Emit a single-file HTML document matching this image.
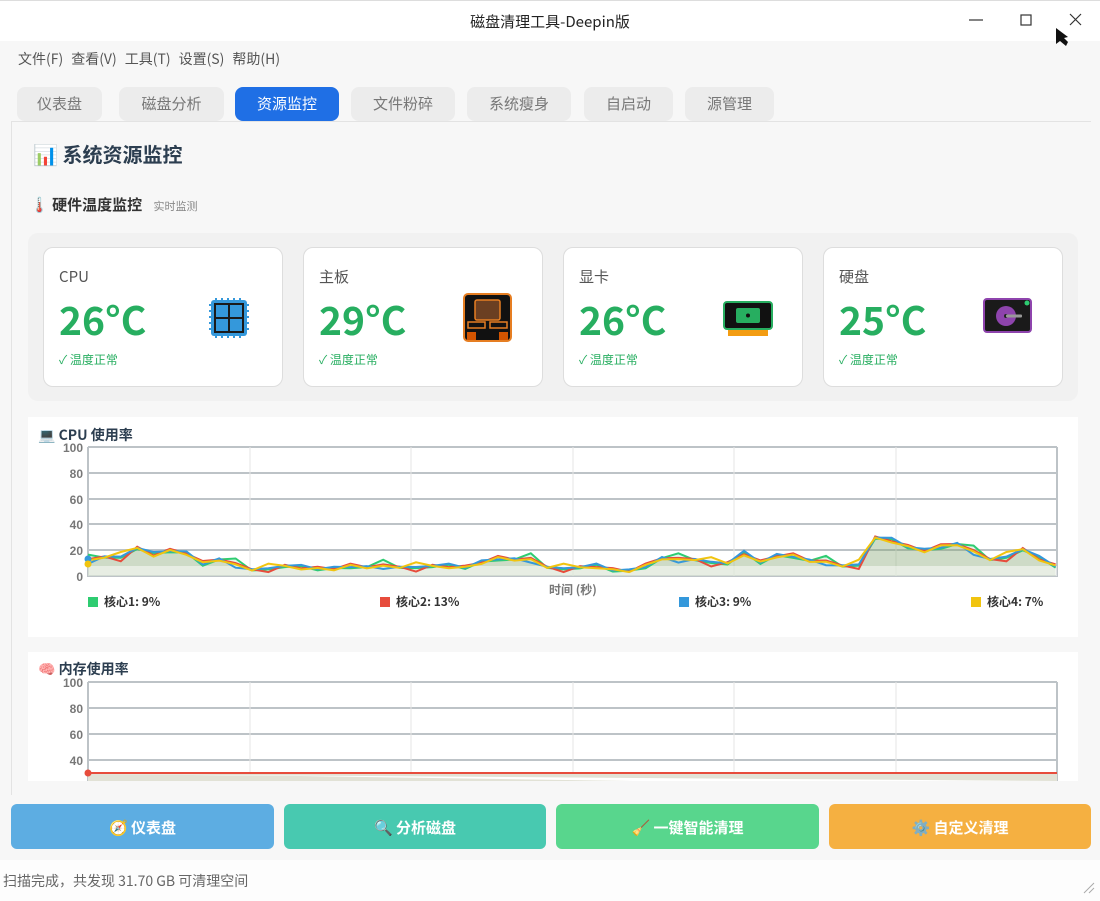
<!DOCTYPE html>
<html><head><meta charset="utf-8">
<style>
*{margin:0;padding:0;box-sizing:border-box}
body{width:1100px;height:901px;overflow:hidden;background:#f7f7f7;font-family:"Noto Sans CJK SC","Liberation Sans",sans-serif;position:relative;color:#333}
.abs{position:absolute}
.title{left:0;top:0;width:1100px;height:41px;background:#fff;border-top:1px solid #ddd;text-align:center;line-height:41px;font-size:15px;color:#222}
.menu{left:18px;top:49px;font-size:14px;color:#555}
.menu span{margin-right:8px}
.tab{top:87px;height:34px;border-radius:8px;background:#ececec;color:#777;font-size:15px;text-align:center;line-height:34px}
.tab.on{background:#1f6fe5;color:#fff}
.panel{left:11px;top:121px;width:1080px;height:674px;background:#f7f7f7;border-top:1px solid #e3e3e3;border-left:1px solid #e3e3e3}
.card{top:247px;width:240px;height:140px;background:#fff;border:1px solid #ddd;border-radius:10px}
.card .n{position:absolute;left:15px;top:18px;font-size:15px;color:#555}
.card .t{position:absolute;left:15px;top:42px;font-size:39px;line-height:58px;font-weight:bold;color:#27ae60}
.card .s{position:absolute;left:15px;top:103px;font-size:12px;color:#27ae60}
.card svg{position:absolute}
.btn{top:804px;height:45px;border-radius:6px;color:#fff;font-size:15px;font-weight:bold;text-align:center;line-height:47px}
.ax{font-size:12px;font-weight:bold;fill:#777;font-family:"Liberation Sans",sans-serif}
.lg{font-size:12px;font-weight:bold;color:#333;position:absolute}
.lg i{display:inline-block;width:10px;height:10px;margin-right:6px;vertical-align:-1px}
</style></head><body>
<div class="abs title">磁盘清理工具-Deepin版</div>
<svg class="abs" style="left:960px;top:8px" width="140" height="40">
<line x1="9" y1="12" x2="23" y2="12" stroke="#333" stroke-width="1.2"/>
<rect x="61" y="7" width="10" height="10" fill="none" stroke="#333" stroke-width="1.2"/>
<path d="M110 6L121 17M121 6L110 17" stroke="#333" stroke-width="1.2"/>
<path d="M96 20L96 36L100 33L106 38L108 34L104 30L108 29Z" fill="#111"/>
</svg>
<div class="abs menu"><span>文件(F)</span><span>查看(V)</span><span>工具(T)</span><span>设置(S)</span><span>帮助(H)</span></div>
<div class="abs tab" style="left:17px;width:85px">仪表盘</div>
<div class="abs tab" style="left:119px;width:105px">磁盘分析</div>
<div class="abs tab on" style="left:235px;width:104px">资源监控</div>
<div class="abs tab" style="left:351px;width:104px">文件粉碎</div>
<div class="abs tab" style="left:467px;width:104px">系统瘦身</div>
<div class="abs tab" style="left:584px;width:89px">自启动</div>
<div class="abs tab" style="left:685px;width:89px">源管理</div>
<div class="abs panel"></div>
<div class="abs" style="left:33px;top:139px;font-size:20px;font-weight:bold;color:#2c3e50">📊 系统资源监控</div>
<div class="abs" style="left:30px;top:194px;font-size:15px;font-weight:bold;color:#333">🌡️ 硬件温度监控 <span style="font-size:11px;color:#888;font-weight:normal;margin-left:8px">实时监测</span></div>
<div class="abs" style="left:28px;top:233px;width:1050px;height:168px;background:#f1f1f1;border-radius:10px"></div>

<div class="abs card" style="left:43px"><div class="n">CPU</div><div class="t">26°C</div><div class="s">✓ 温度正常</div>
<svg style="left:163px;top:48px" width="44" height="44" viewBox="0 0 44 44"><g fill="#3498db"><rect x="8" y="2" width="2" height="40"/><rect x="14" y="2" width="2" height="40"/><rect x="20" y="2" width="2" height="40"/><rect x="26" y="2" width="2" height="40"/><rect x="32" y="2" width="2" height="40"/><rect x="2" y="8" width="40" height="2"/><rect x="2" y="14" width="40" height="2"/><rect x="2" y="20" width="40" height="2"/><rect x="2" y="26" width="40" height="2"/><rect x="2" y="32" width="40" height="2"/></g><rect x="4" y="4" width="36" height="36" rx="3" fill="#3498db"/><rect x="7" y="7" width="30" height="30" fill="#1a1a1a"/><g fill="#3498db"><rect x="9" y="9" width="12" height="12"/><rect x="23" y="9" width="12" height="12"/><rect x="9" y="23" width="12" height="12"/><rect x="23" y="23" width="12" height="12"/></g></svg></div>

<div class="abs card" style="left:303px"><div class="n">主板</div><div class="t">29°C</div><div class="s">✓ 温度正常</div>
<svg style="left:159px;top:45px" width="50" height="50" viewBox="0 0 50 50"><rect x="1" y="1" width="47" height="47" rx="4" fill="#111"/><rect x="1" y="1" width="47" height="47" rx="4" fill="none" stroke="#e67e22" stroke-width="2"/><rect x="12" y="7" width="25" height="20" rx="2" fill="#6b3f22" stroke="#e67e22" stroke-width="1.5"/><rect x="5" y="29" width="17" height="6" fill="none" stroke="#e67e22" stroke-width="1.5"/><rect x="27" y="29" width="17" height="6" fill="none" stroke="#e67e22" stroke-width="1.5"/><rect x="4" y="39" width="9" height="8" fill="#d35400"/><rect x="36" y="39" width="9" height="8" fill="#d35400"/></svg></div>

<div class="abs card" style="left:563px"><div class="n">显卡</div><div class="t">26°C</div><div class="s">✓ 温度正常</div>
<svg style="left:159px;top:53px" width="50" height="38" viewBox="0 0 50 38"><rect x="5" y="26" width="40" height="9" fill="#f39c12"/><rect x="1" y="1" width="48" height="27" rx="3" fill="#111" stroke="#27ae60" stroke-width="2"/><rect x="13" y="7" width="24" height="15" rx="2" fill="#27ae60"/><circle cx="25" cy="14.5" r="2" fill="#111"/></svg></div>

<div class="abs card" style="left:823px"><div class="n">硬盘</div><div class="t">25°C</div><div class="s">✓ 温度正常</div>
<svg style="left:159px;top:50px" width="50" height="36" viewBox="0 0 50 36"><rect x="1" y="1" width="47" height="33" rx="3" fill="#1a1a1a" stroke="#8e44ad" stroke-width="2"/><circle cx="23" cy="18" r="10" fill="#8e44ad"/><circle cx="23" cy="18" r="2" fill="#222"/><rect x="23" y="16.5" width="16" height="3" rx="1" fill="#999"/><circle cx="44" cy="5" r="2.5" fill="#2ecc71"/></svg></div>

<div class="abs" style="left:28px;top:417px;width:1050px;height:220px;background:#fff"></div>
<div class="abs" style="left:38px;top:425px;font-size:14px;font-weight:bold;color:#2c3e50">💻 CPU 使用率</div>
<svg class="abs" style="left:0;top:0" width="1100" height="800" id="cpu"></svg>
<div class="abs" style="left:549px;top:581px;font-size:12px;font-weight:bold;color:#777">时间 (秒)</div>
<div class="lg" style="left:88px;top:593px"><i style="background:#2ecc71"></i>核心1: 9%</div>
<div class="lg" style="left:380px;top:593px"><i style="background:#e74c3c"></i>核心2: 13%</div>
<div class="lg" style="left:679px;top:593px"><i style="background:#3498db"></i>核心3: 9%</div>
<div class="lg" style="left:971px;top:593px"><i style="background:#f1c40f"></i>核心4: 7%</div>

<div class="abs" style="left:28px;top:652px;width:1050px;height:129px;background:#fff;overflow:hidden">
<svg width="1050" height="129" viewBox="28 652 1050 129" style="position:absolute;left:0;top:0">
<g stroke="#bdc3c7" stroke-width="2"><line x1="88" y1="708" x2="1057" y2="708"/><line x1="88" y1="734" x2="1057" y2="734"/><line x1="88" y1="760" x2="1057" y2="760"/><line x1="88" y1="682" x2="1057" y2="682"/></g>
<g stroke="#e5e5e5"><line x1="250" y1="682" x2="250" y2="790"/><line x1="411" y1="682" x2="411" y2="790"/><line x1="573" y1="682" x2="573" y2="790"/><line x1="734" y1="682" x2="734" y2="790"/><line x1="896" y1="682" x2="896" y2="790"/></g>
<line x1="88" y1="682" x2="88" y2="790" stroke="#bdc3c7" stroke-width="2"/><line x1="1057" y1="682" x2="1057" y2="790" stroke="#bdc3c7" stroke-width="2"/>
<path d="M88 774L1057 773L1057 790L88 790Z" fill="#e2e2d6"/>
<path d="M88 774L300 776L700 782L1057 781" fill="#fff"/>
<line x1="88" y1="773" x2="1057" y2="773" stroke="#e74c3c" stroke-width="2"/>
<circle cx="88" cy="773" r="3.5" fill="#e74c3c"/>
<g class="ax" text-anchor="end"><text x="83" y="687">100</text><text x="83" y="713">80</text><text x="83" y="739">60</text><text x="83" y="765">40</text></g>
</svg>
<div style="position:absolute;left:10px;top:7px;font-size:14px;font-weight:bold;color:#2c3e50">🧠 内存使用率</div>
</div>

<div class="abs btn" style="left:11px;width:263px;background:#5dade2">🧭 仪表盘</div>
<div class="abs btn" style="left:284px;width:262px;background:#48c9b0">🔍 分析磁盘</div>
<div class="abs btn" style="left:556px;width:263px;background:#58d68d">🧹 一键智能清理</div>
<div class="abs btn" style="left:829px;width:262px;background:#f5b041">⚙️ 自定义清理</div>
<div class="abs" style="left:0;top:860px;width:1100px;height:41px;background:#fdfdfd"></div>
<div class="abs" style="left:3px;top:871px;font-size:14px;color:#666">扫描完成，共发现 31.70 GB 可清理空间</div>
<svg class="abs" style="left:1082px;top:881px" width="14" height="14"><path d="M2 12L12 2M7 12L12 7" stroke="#aaa"/></svg>

<script>
var base=[13,17,15,20,15,22,20,8,11,10,7,6,6,5,8,8,6,5,9,9,7,6,6,9,13,12,11,14,9,6,5,6,7,6,6,12,14,15,11,8,16,13,18,14,10,12,10,9,28,26,25,22,21,23,20,15,15,19,12,10];
var cols=["#2ecc71","#e74c3c","#3498db","#f1c40f"];
var s='<g stroke="#bdc3c7" stroke-width="2">';
[473,499,524,550,576,447].forEach(function(y){s+='<line x1="88" y1="'+y+'" x2="1057" y2="'+y+'"/>'});
s+='</g><g stroke="#e5e5e5">';
[250,411,573,734,896].forEach(function(x){s+='<line x1="'+x+'" y1="447" x2="'+x+'" y2="576"/>'});
s+='</g><line x1="88" y1="447" x2="88" y2="577" stroke="#bdc3c7" stroke-width="2"/><line x1="1057" y1="447" x2="1057" y2="577" stroke="#bdc3c7" stroke-width="2"/>';
var ser=[];
for(var c=0;c<4;c++){var p=[];for(var i=0;i<60;i++){var v=base[i]+((i*7+c*13)%9-4)*0.9*(c%2?1:-1);if(v<3)v=3;p.push([88+i*16.4,576-v*1.29]);}ser.push(p);}
var fills=["rgba(46,204,113,0.15)","rgba(231,76,60,0.08)","rgba(52,152,219,0.12)","rgba(241,196,15,0.1)"];
for(c=0;c<4;c++){var d='M88 576';ser[c].forEach(function(q){d+='L'+q[0].toFixed(1)+' '+q[1].toFixed(1)});d+='L1055.6 576Z';s+='<path d="'+d+'" fill="'+fills[c]+'"/>';}
s+='<path d="M88 566L1057 566L1057 576L88 576Z" fill="rgba(255,255,255,0.5)"/>';
for(c=0;c<4;c++){var d2='M'+ser[c].map(function(q){return q[0].toFixed(1)+' '+q[1].toFixed(1)}).join('L');s+='<path d="'+d2+'" fill="none" stroke="'+cols[c]+'" stroke-width="2"/>';}
s+='<circle cx="88" cy="559" r="3.5" fill="#3498db"/><circle cx="88" cy="564" r="3.5" fill="#f1c40f"/>';
s+='<g class="ax" text-anchor="end"><text x="83" y="452">100</text><text x="83" y="478">80</text><text x="83" y="504">60</text><text x="83" y="529">40</text><text x="83" y="555">20</text><text x="83" y="581">0</text></g>';
document.getElementById('cpu').innerHTML=s;
</script>
</body></html>
